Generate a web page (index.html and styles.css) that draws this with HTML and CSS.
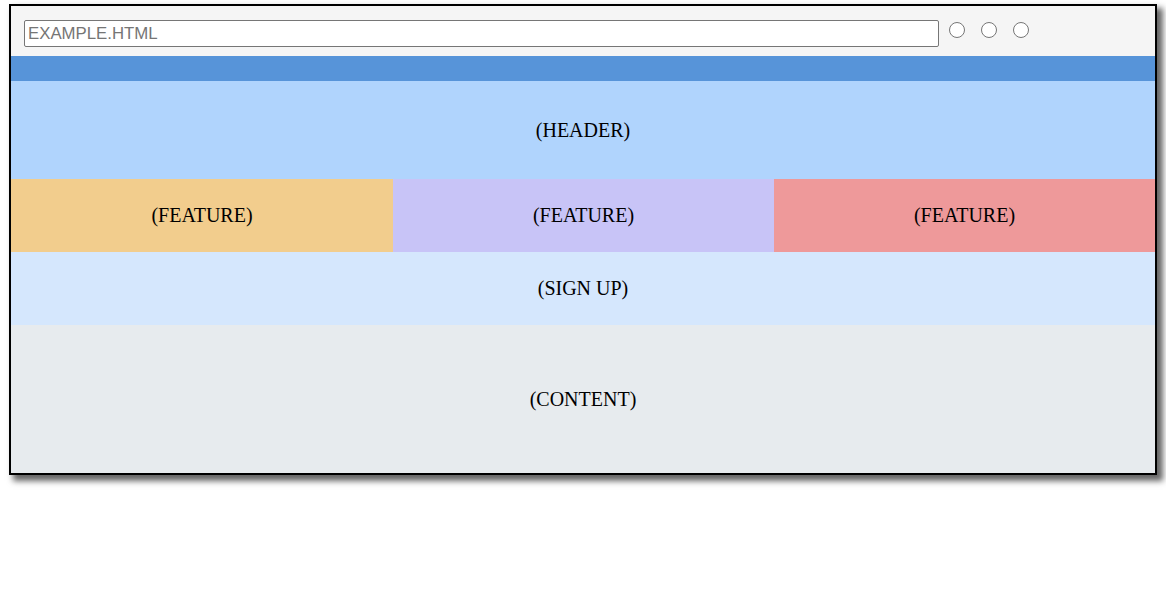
FILE: index.html
```html
<!DOCTYPE html>
<html>
<head>
<meta charset="utf-8">
<link rel="stylesheet" href="styles.css">
</head>
<body>
<div class="frame">
  <div class="toolbar">
    <input class="address" type="text" value="EXAMPLE.HTML" readonly>
    <div class="dots">
      <span class="dot"></span>
      <span class="dot"></span>
      <span class="dot"></span>
    </div>
  </div>
  <div class="topbar"></div>
  <div class="header">(HEADER)</div>
  <div class="features">
    <div class="feature f1">(FEATURE)</div>
    <div class="feature f2">(FEATURE)</div>
    <div class="feature f3">(FEATURE)</div>
  </div>
  <div class="signup">(SIGN UP)</div>
  <div class="content">(CONTENT)</div>
</div>
</body>
</html>
```
FILE: styles.css
```css
html, body {
  margin: 0;
  padding: 0;
  background: #ffffff;
}
body {
  font-family: "Liberation Serif", "Times New Roman", serif;
  color: #000;
  padding: 4px 0 30px 9px;
}
.frame {
  width: 1144px;
  border: 2px solid #000;
  box-shadow: 5px 5px 6px 1px #666666;
  display: flex;
  flex-direction: column;
}
.toolbar {
  height: 50px;
  box-sizing: border-box;
  background: #f5f5f5;
  display: flex;
  align-items: flex-start;
  padding: 14px 0 0 13px;
}
.address {
  width: 915px;
  height: 27px;
  box-sizing: border-box;
  border: 1px solid #767676;
  border-radius: 2px;
  padding: 0 3px;
  margin: 0;
  font-family: "Liberation Sans", Arial, sans-serif;
  font-size: 16.8px;
  color: #757575;
  background: #fff;
  outline: none;
}
.dots {
  display: flex;
  gap: 16px;
  margin-left: 10px;
  padding-top: 2px;
}
.dot {
  width: 16px;
  height: 16px;
  box-sizing: border-box;
  border: 1px solid #767676;
  border-radius: 50%;
  background: #fff;
}
.topbar {
  height: 25px;
  background: #5794d9;
}
.header, .feature, .signup, .content {
  display: flex;
  align-items: center;
  justify-content: center;
  font-size: 20px;
}
.header {
  height: 98px;
  background: #b0d4fd;
}
.features {
  display: grid;
  grid-template-columns: 382px 381px 381px;
  height: 73px;
}
.f1 { background: #f2cd8d; }
.f2 { background: #c8c4f7; }
.f3 { background: #ee999a; }
.signup {
  height: 73px;
  background: #d5e7fd;
}
.content {
  height: 148px;
  background: #e7ebee;
}
```
